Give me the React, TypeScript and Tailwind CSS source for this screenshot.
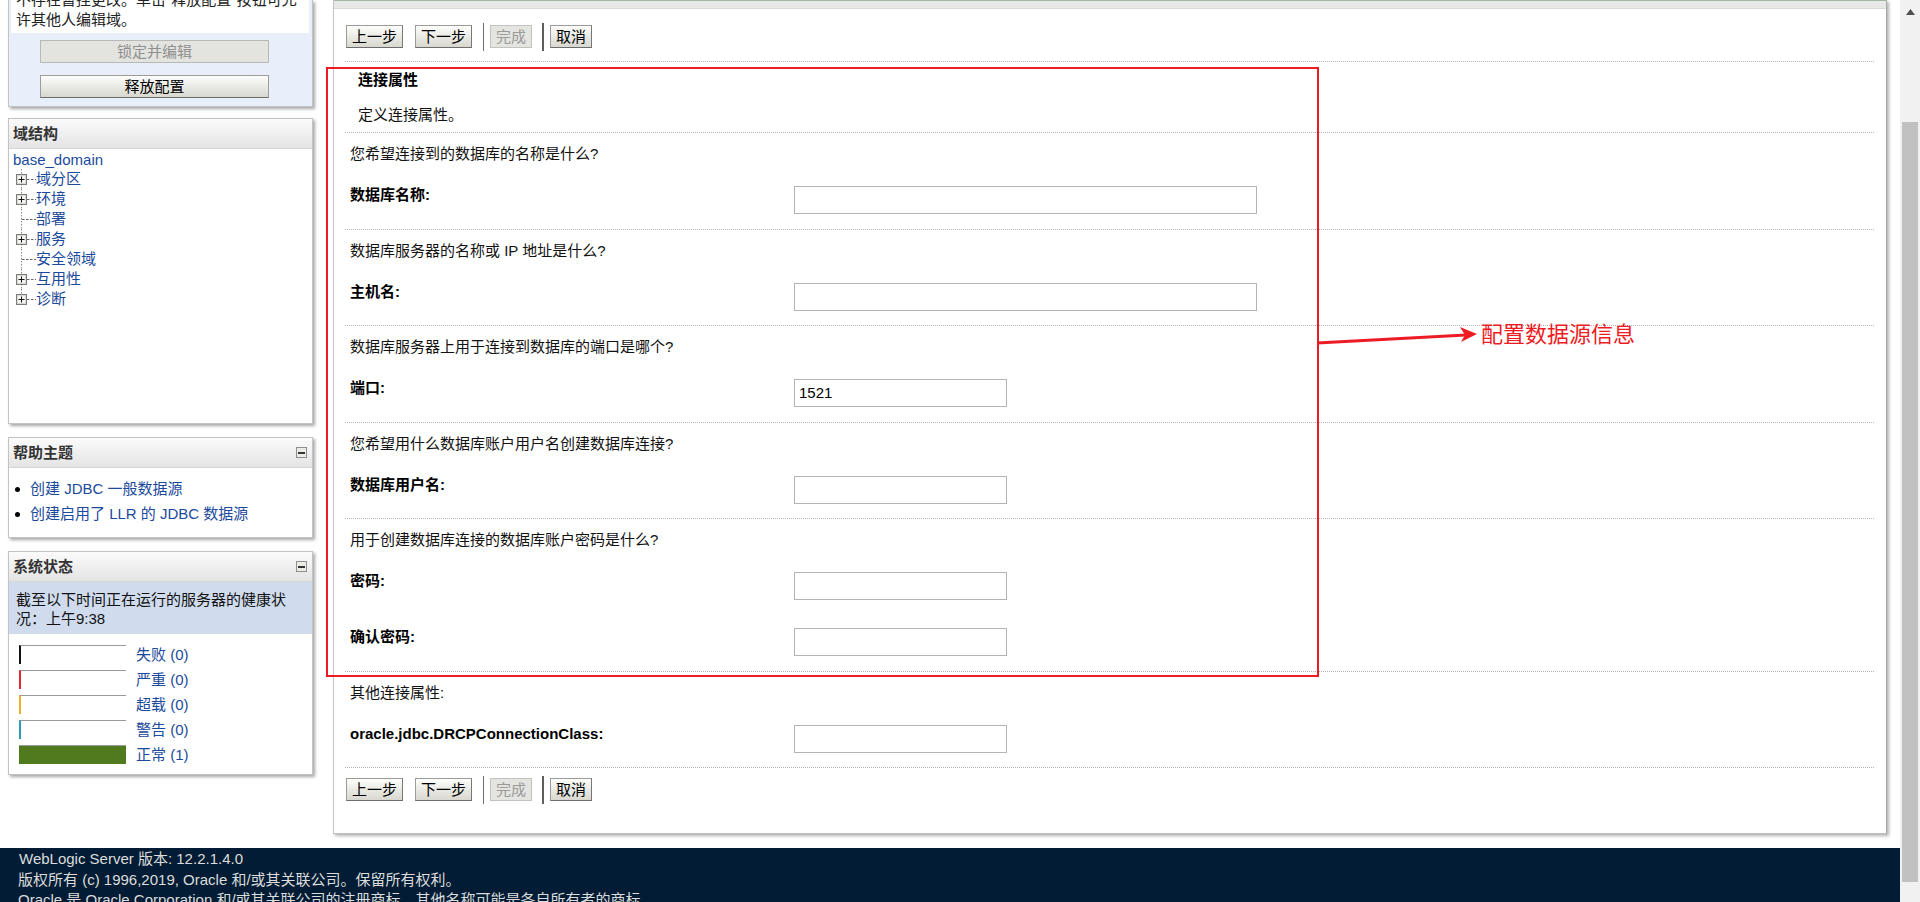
import React from 'react';

const LINK = 'text-[#1b4a9c]';

const PanelHeader = ({ title, toggle }: { title: string; toggle?: boolean }) => (
  <div className="flex h-[30px] items-center justify-between border-b border-[#d6d6d6] bg-linear-to-b from-[#fbfbfb] to-[#e4e4e4] pl-[4px] pr-[5px]">
    <span className="font-bold leading-[20px] text-[#333]">{title}</span>
    {toggle && (
      <span className="flex h-[11px] w-[11px] items-center justify-center border border-[#8e8e8e] bg-[#ebebe8]">
        <span className="h-[2px] w-[7px] bg-[#333]" />
      </span>
    )}
  </div>
);

const TreeGlyph = ({ plus, last }: { plus?: boolean; last?: boolean }) => (
  <svg width="23" height="20" viewBox="0 0 23 20" className="shrink-0">
    <line x1="8.5" y1="0" x2="8.5" y2={last ? 10 : 20} stroke="#8a8a8a" strokeDasharray="1.5 1.5" />
    <line x1={plus ? 14 : 9} y1="10.5" x2="23" y2="10.5" stroke="#666" strokeDasharray="2.5 1.5" />
    {plus && (
      <>
        <rect x="3.5" y="5.5" width="10" height="10" fill="#f5f5f3" stroke="#7c7c7c" />
        <rect x="4.5" y="6.5" width="8" height="8" fill="none" stroke="#d8d8d4" />
        <line x1="5.5" y1="10.5" x2="11.5" y2="10.5" stroke="#111" />
        <line x1="8.5" y1="7.5" x2="8.5" y2="13.5" stroke="#111" />
      </>
    )}
  </svg>
);

const tree = [
  { label: '域分区', plus: true },
  { label: '环境', plus: true },
  { label: '部署', plus: false },
  { label: '服务', plus: true },
  { label: '安全领域', plus: false },
  { label: '互用性', plus: true },
  { label: '诊断', plus: true },
];

const health = [
  { label: '失败 (0)', bar: 'border-l-2 border-l-[#111]' },
  { label: '严重 (0)', bar: 'border-l-2 border-l-[#e0282e]' },
  { label: '超载 (0)', bar: 'border-l-2 border-l-[#f2b01e]' },
  { label: '警告 (0)', bar: 'border-l-2 border-l-[#2b9bb5]' },
  { label: '正常 (1)', bar: 'bg-[#4f7a1e]' },
];

const Btn = ({ children, disabled, w }: { children: React.ReactNode; disabled?: boolean; w: string }) => (
  <button
    className={`h-[23px] ${w} border text-[15px] leading-[21px] ${
      disabled
        ? 'border-[#c2c2c0] bg-[#e4e4e0] text-[#9a9a9a]'
        : 'border-[#9c9c9c] border-r-[#777] border-b-[#6c6c6c] bg-linear-to-b from-[#fdfdfb] to-[#d8d8d0] text-black'
    }`}
  >
    {children}
  </button>
);

const ButtonRow = () => (
  <div className="ml-[1px] flex h-[23px] items-center">
    <Btn w="w-[57px]">上一步</Btn>
    <div className="ml-[12px]">
      <Btn w="w-[57px]">下一步</Btn>
    </div>
    <div className="ml-[11px] h-[28px] w-[1px] bg-[#6f6f6f]" />
    <div className="ml-[6px]">
      <Btn w="w-[42px]" disabled>
        完成
      </Btn>
    </div>
    <div className="ml-[10px] h-[28px] w-[2px] bg-[#5e5e5e]" />
    <div className="ml-[6px]">
      <Btn w="w-[42px]">取消</Btn>
    </div>
  </div>
);

const Field = ({ label, value, wide }: { label: string; value?: string; wide?: boolean }) => (
  <div className="flex h-[28px] items-start">
    <div className="-mt-[1px] h-[20px] w-[444px] font-bold leading-[20px] text-black">{label}</div>
    <div
      className={`h-[28px] border border-[#b3b3b3] bg-white pl-[4px] leading-[26px] text-black ${
        wide ? 'w-[463px]' : 'w-[213px]'
      }`}
    >
      {value}
    </div>
  </div>
);

const Section = ({ question, children }: { question: string; children: React.ReactNode }) => (
  <div className="border-t border-dotted border-[#b5b5b5] pb-[14.5px] pl-[5px] pt-[11px]">
    <div className="h-[20px] leading-[20px] text-[#111]">{question}</div>
    <div className="mt-[22px] flex flex-col gap-[28px]">{children}</div>
  </div>
);

export default function App() {
  return (
    <div className="relative flex h-[902px] w-[1920px] overflow-hidden bg-white font-['Liberation_Sans','Noto_Sans_CJK_SC',sans-serif] text-[15px]">
      <div className="flex w-[1900px] flex-col">
        <div className="flex h-[848px] shrink-0 items-start">
          {/* left column */}
          <div className="ml-[8px] flex w-[305px] flex-col">
            <div className="h-[107px] border-x border-b border-[#c3c3c3] bg-[#e8eefa] shadow-[2px_2px_3px_rgba(0,0,0,0.35)]">
              <div className="ml-[2px] mr-[3px] h-[33px] overflow-hidden bg-white pl-[5px]">
                <div className="-mt-[10px] whitespace-nowrap leading-[20px] text-[#222]">
                  <div className="h-[20px]">不存在暂挂更改。单击"释放配置"按钮可允</div>
                  <div className="h-[20px]">许其他人编辑域。</div>
                </div>
              </div>
              <div className="ml-[31px] mt-[7px] h-[23px] w-[229px] border border-[#b8b8b6] bg-[#e3e3df] text-center leading-[21px] text-[#8f8f8f]">
                锁定并编辑
              </div>
              <div className="ml-[31px] mt-[12px] h-[23px] w-[229px] border border-[#9c9c9c] border-b-[#6c6c6c] bg-linear-to-b from-[#fdfdfb] to-[#d8d8d0] text-center leading-[21px] text-black">
                释放配置
              </div>
            </div>

            <div className="mt-[11px] h-[306px] border border-[#c3c3c3] bg-white shadow-[2px_2px_3px_rgba(0,0,0,0.35)]">
              <PanelHeader title="域结构" />
              <div className="pl-[4px] pt-[1px]">
                <div className={`h-[19px] leading-[20px] ${LINK}`}>base_domain</div>
                {tree.map((t, i) => (
                  <div key={t.label} className="flex h-[20px] items-center">
                    <TreeGlyph plus={t.plus} last={i === tree.length - 1} />
                    <span className={`h-[20px] leading-[20px] ${LINK}`}>{t.label}</span>
                  </div>
                ))}
              </div>
            </div>

            <div className="mt-[13px] border border-[#c3c3c3] bg-white shadow-[2px_2px_3px_rgba(0,0,0,0.35)]">
              <PanelHeader title="帮助主题" toggle />
              <div className="flex flex-col gap-[5px] pb-[13px] pl-[5px] pt-[11px]">
                {['创建 JDBC 一般数据源', '创建启用了 LLR 的 JDBC 数据源'].map((t) => (
                  <div key={t} className="flex h-[20px] items-center">
                    <span className="ml-[1px] h-[5px] w-[5px] rounded-full bg-black" />
                    <span className={`ml-[10px] h-[20px] leading-[20px] ${LINK}`}>{t}</span>
                  </div>
                ))}
              </div>
            </div>

            <div className="mt-[13px] border border-[#c3c3c3] bg-white shadow-[2px_2px_3px_rgba(0,0,0,0.35)]">
              <PanelHeader title="系统状态" toggle />
              <div className="bg-[#d0dcee] pb-[6px] pl-[7px] pt-[8px] leading-[19px] text-[#111]">
                <div className="h-[19px]">截至以下时间正在运行的服务器的健康状</div>
                <div className="h-[19px]">况：上午9:38</div>
              </div>
              <div className="flex flex-col gap-[6px] pb-[10px] pl-[10px] pt-[11px]">
                {health.map((h) => (
                  <div key={h.label} className="flex h-[19px] items-center">
                    <div className={`h-[19px] w-[107px] border-t border-[#9a9a9a] ${h.bar}`} />
                    <span className={`ml-[10px] h-[20px] leading-[20px] ${LINK}`}>{h.label}</span>
                  </div>
                ))}
              </div>
            </div>
          </div>

          {/* main panel */}
          <div className="ml-[20px] flex w-[1554px] flex-col border-x border-b border-x-[#c6c6c6] border-b-[#bdbdbd] border-r-[#a9a9a9] bg-white shadow-[2px_2px_3px_rgba(0,0,0,0.3)]">
            <div className="h-[9px] border-t border-b border-t-[#9fb89f] border-b-[#dadada] bg-[#e8e8e8]" />
            <div className="pl-[11px] pr-[12px] pt-[16px]">
              <ButtonRow />
              <div className="mt-[13px] border-t border-dotted border-[#b5b5b5] pb-[7px] pl-[13px] pt-[8px]">
                <div className="h-[20px] font-bold leading-[20px] text-black">连接属性</div>
                <div className="mt-[15px] h-[20px] leading-[20px] text-[#111]">定义连接属性。</div>
              </div>
              <Section question="您希望连接到的数据库的名称是什么?">
                <Field label="数据库名称:" wide />
              </Section>
              <Section question="数据库服务器的名称或 IP 地址是什么?">
                <Field label="主机名:" wide />
              </Section>
              <Section question="数据库服务器上用于连接到数据库的端口是哪个?">
                <Field label="端口:" value="1521" />
              </Section>
              <Section question="您希望用什么数据库账户用户名创建数据库连接?">
                <Field label="数据库用户名:" />
              </Section>
              <Section question="用于创建数据库连接的数据库账户密码是什么?">
                <Field label="密码:" />
                <Field label="确认密码:" />
              </Section>
              <Section question="其他连接属性:">
                <Field label="oracle.jdbc.DRCPConnectionClass:" />
              </Section>
              <div className="border-t border-dotted border-[#b5b5b5] pb-[32px] pt-[10px]">
                <ButtonRow />
              </div>
            </div>
          </div>
        </div>

        <footer className="flex-1 overflow-hidden bg-[#011c34] pl-[18px] pt-[1px] leading-[20.5px] text-[#dcdcdc]">
          <div className="h-[20.5px] pl-[1px]">WebLogic Server 版本: 12.2.1.4.0</div>
          <div className="h-[20.5px]">版权所有 (c) 1996,2019, Oracle 和/或其关联公司。保留所有权利。</div>
          <div className="h-[20.5px]">Oracle 是 Oracle Corporation 和/或其关联公司的注册商标。其他名称可能是各自所有者的商标。</div>
        </footer>
      </div>

      {/* window scrollbar */}
      <div className="flex w-[20px] flex-col bg-[#f1f1f1]">
        <div className="flex h-[17px] items-center justify-center pt-[6px]">
          <svg width="9" height="6" viewBox="0 0 9 6">
            <polygon points="4.5,0 9,6 0,6" fill="#505050" />
          </svg>
        </div>
        <div className="ml-[2px] mt-[105px] h-[760px] w-[16px] bg-[#c1c1c1]" />
      </div>

      {/* red annotation */}
      <div className="pointer-events-none absolute left-[326px] top-[67px] h-[610px] w-[993px] border-2 border-[#ed1c24]" />
      <svg className="pointer-events-none absolute left-[1316px] top-[322px]" width="165" height="26" viewBox="0 0 165 26">
        <line x1="1" y1="21" x2="150" y2="13" stroke="#ed1c24" strokeWidth="3" />
        <polygon points="144,5 161,12 145,20 149,13" fill="#ed1c24" />
      </svg>
      <div className="pointer-events-none absolute left-[1481px] top-[321px] text-[22px] leading-[28px] text-[#ed1c24]">
        配置数据源信息
      </div>
    </div>
  );
}
